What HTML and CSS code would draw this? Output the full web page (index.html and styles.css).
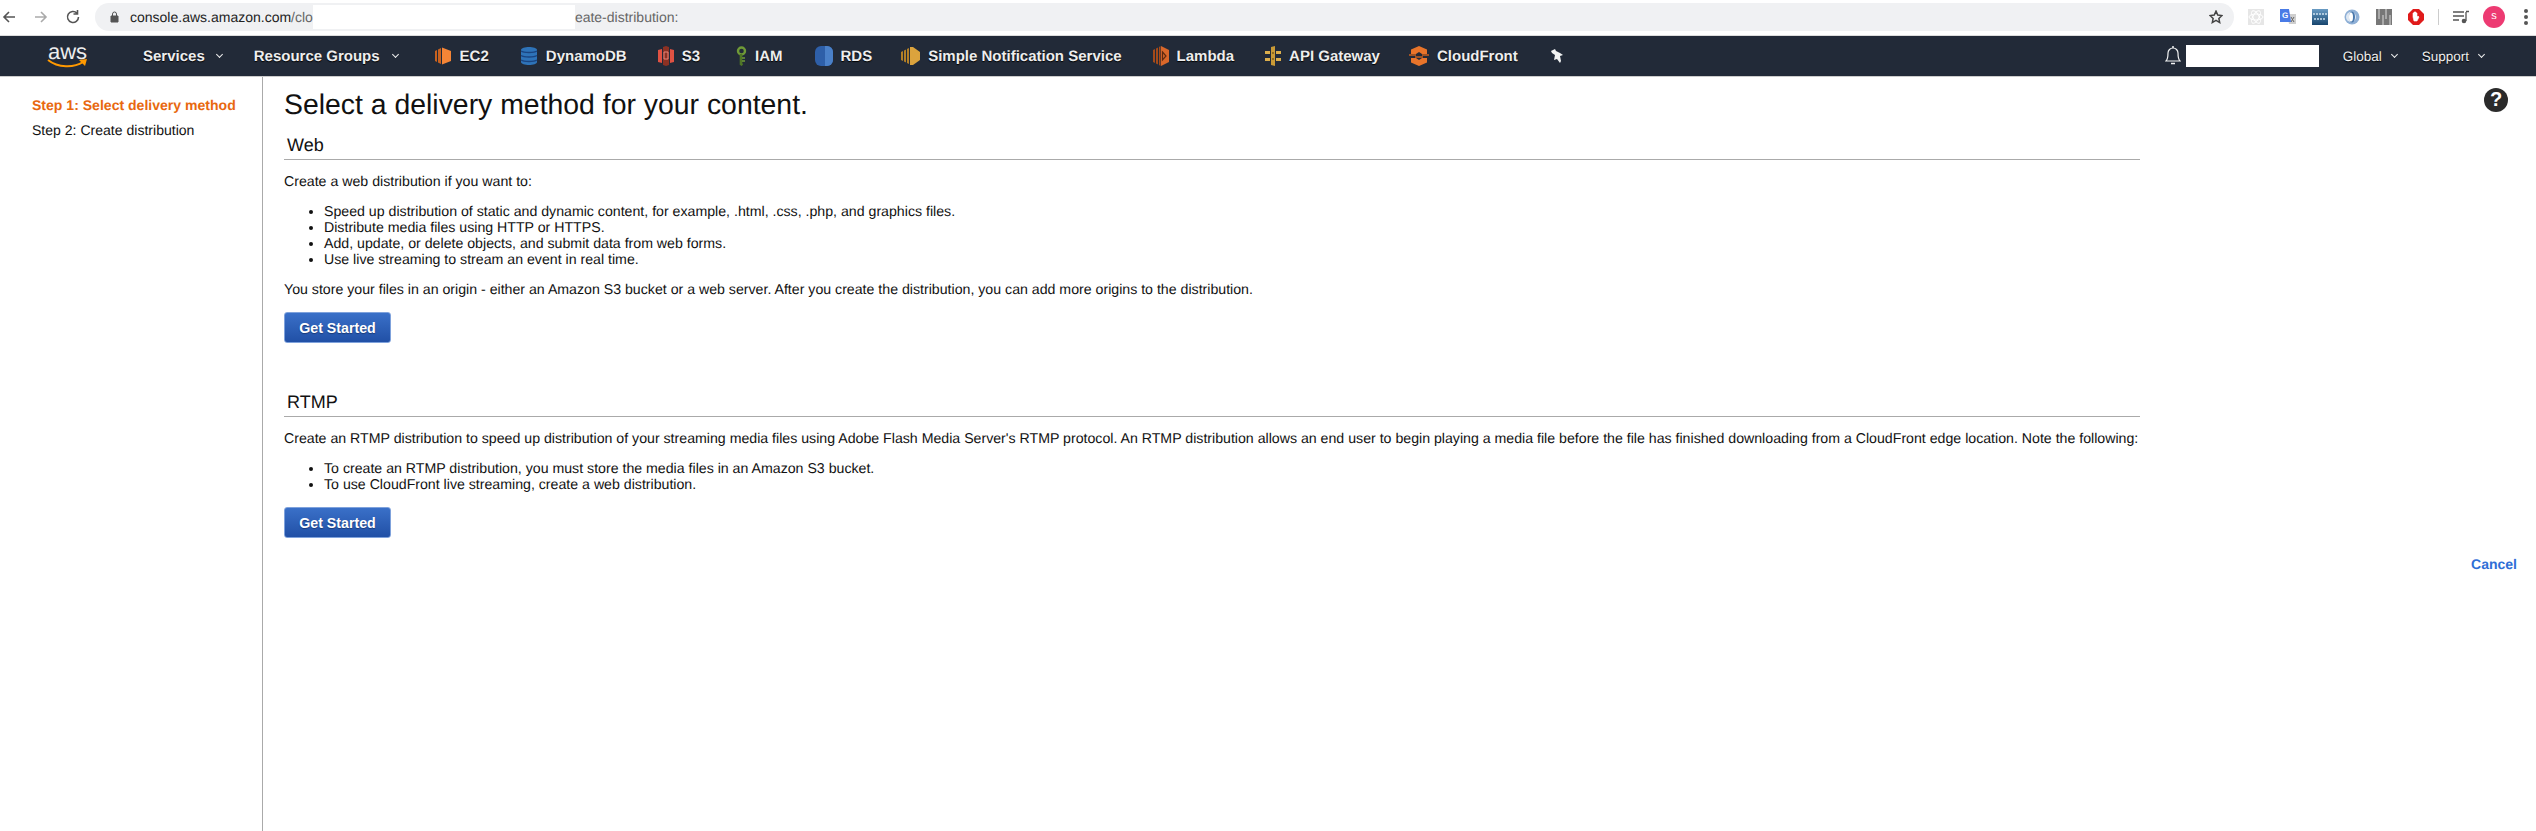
FILE: index.html
```html
<!DOCTYPE html>
<html lang="en">
<head>
    <meta charset="UTF-8">
    <title>CloudFront Management Console</title>
    <link rel="stylesheet" href="styles.css">
</head>
<body>
    <div class="browser-bar">
        <svg class="nav-icon" width="16" height="16" viewBox="0 0 16 16"><path d="M14 8H3M8 3 3 8l5 5" fill="none" stroke="#555" stroke-width="1.6"/></svg>
        <svg class="nav-icon" width="16" height="16" viewBox="0 0 16 16"><path d="M2 8h11M8 3l5 5-5 5" fill="none" stroke="#aaa" stroke-width="1.6"/></svg>
        <svg class="nav-icon" width="16" height="16" viewBox="0 0 16 16"><path d="M13.5 8a5.500 5.500 0 1 1-1.600-3.900M12.500 1v4h-4" fill="none" stroke="#555" stroke-width="1.6"/></svg>
        <div class="address">
            <svg class="lock" width="9" height="12" viewBox="0 0 9 12"><path d="M1 5h7v6H1zM2.500 5V3a2 2 0 0 1 4 0v2" fill="none" stroke="#555"/><path d="M1 5h7v6H1z" fill="#555"/></svg>
            <span class="url"><b>console.aws.amazon.com</b>/clo</span>
            <span class="url-mask"></span>
            <span class="url">eate-distribution:</span>
            <svg class="star" width="14" height="14" viewBox="0 0 24 24"><path d="m12 2 3 6.600 7.200.9-5.300 4.900 1.400 7.100L12 17.900l-6.300 3.600 1.400-7.100L1.800 9.500 9 8.600z" fill="none" stroke="#444" stroke-width="2.600"/></svg>
        </div>
        <div class="extensions">
            <svg width="16" height="16" viewBox="0 0 16 16"><rect width="16" height="16" fill="#e6e6e6"/><g fill="none" stroke="#fff" stroke-width="1"><ellipse cx="8" cy="8" rx="7" ry="3"/><ellipse cx="8" cy="8" rx="7" ry="3" transform="rotate(60 8 8)"/><ellipse cx="8" cy="8" rx="7" ry="3" transform="rotate(120 8 8)"/></g></svg>
            <svg width="16" height="16" viewBox="0 0 16 16"><path d="M7 5h9v10H9z" fill="#cfcfcf"/><path d="M11 8l3 5M14 8l-3 5" stroke="#666"/><path d="M0 0h9l2 13H0z" fill="#4a7be6"/><text x="2" y="9" class="ext-letter">G</text></svg>
            <svg width="16" height="16" viewBox="0 0 16 16"><defs><linearGradient id="dictfill" x1="0" y1="0" x2="0" y2="1"><stop offset="0" stop-color="#6a9cc4"/><stop offset="1" stop-color="#17456e"/></linearGradient></defs><rect width="16" height="16" fill="url(#dictfill)"/><path d="M1 5h14M2 10h12" stroke="#cfe2f0" stroke-width="1.400" stroke-dasharray="2 1"/></svg>
            <svg width="16" height="16" viewBox="0 0 16 16"><circle cx="8" cy="8" r="7.500" fill="#8fb0d6"/><circle cx="7" cy="8" r="5" fill="#dfe8f2"/><ellipse cx="8" cy="8" rx="3" ry="5.500" fill="#4a78ac"/><ellipse cx="7" cy="8" rx="2" ry="4.500" fill="#fff"/></svg>
            <svg width="16" height="16" viewBox="0 0 16 16"><rect width="16" height="16" fill="#777"/><path d="M3 0v10M7 6v10M10 0v10M14 6v10" stroke="#ddd" stroke-width="1"/></svg>
            <svg width="16" height="16" viewBox="0 0 16 16"><path d="M5 0h6l5 5v6l-5 5H5l-5-5V5z" fill="#e01b1b"/><path d="M5 8V4h1v3-4h1v4-4h1v4-3h1v4l1-1 1 1-2 4H6z" fill="#fff" stroke="#fff" stroke-width=".6"/></svg>
            <span class="ext-sep"></span>
            <svg class="queue" width="16" height="14" viewBox="0 0 16 14"><path d="M0 2h11M0 6h11M0 10h6M13 2v9M13 1.500h3" fill="none" stroke="#555" stroke-width="1.300"/><circle cx="11" cy="11" r="2.300" fill="#555"/></svg>
            <span class="avatar">s</span>
            <span class="dots"><i></i><i></i><i></i></span>
        </div>
    </div>

    <nav class="topnav">
        <a class="aws-logo">aws
            <svg width="41" height="10" viewBox="0 0 41 10"><path d="M1 1c10 8 26 8 35 2" fill="none" stroke="#f90" stroke-width="2"/><path d="m32 1 8-1-2 7z" fill="#f90"/></svg>
        </a>
        <a class="nav-menu services">Services <span class="caret"></span></a>
        <a class="nav-menu groups">Resource Groups <span class="caret"></span></a>
        <div class="shortcuts">
            <a><svg width="18" height="20" viewBox="0 0 18 20"><path d="M8 1.500 17 5v10l-9 3.500z" fill="#f58536"/><path d="M1 5l2-1v12l-2-1zM4 3.500l3-1.500v16l-3-1.500z" fill="#c8611f"/></svg>EC2</a>
            <a><svg width="18" height="20" viewBox="0 0 18 20"><path d="M1 4c0-4 16-4 16 0v12c0 4-16 4-16 0z" fill="#2e73b8"/><path d="M1 5c3 2 13 2 16 0M1 9.500c3 2 13 2 16 0M1 14c3 2 13 2 16 0" fill="none" stroke="#1a4480" stroke-width="1.400"/></svg>DynamoDB</a>
            <a><svg width="16" height="20" viewBox="0 0 16 20"><path d="M0 4l4-1v14l-4-1zM16 4l-4-1v14l4-1z" fill="#e05243"/><path d="M5 1l3-1 3 1v18l-3 1-3-1z" fill="#8c3123"/><path d="M6 6h4v7H6z" fill="none" stroke="#e8867b"/></svg>S3</a>
            <a class="iam"><svg width="11" height="20" viewBox="0 0 11 20"><circle cx="5.500" cy="5" r="3.500" fill="none" stroke="#6f9a37" stroke-width="2.400"/><path d="M5 8v10l1.500 1" fill="none" stroke="#4f7526" stroke-width="2.600"/><path d="M6 12h3M6 15h3" stroke="#6f9a37" stroke-width="1.600"/></svg>IAM</a>
            <a class="rds"><svg width="18" height="20" viewBox="0 0 18 20"><rect width="18" height="20" rx="6" fill="#2e5fa8"/><path d="M10 0h2a6 6 0 0 1 6 6v8a6 6 0 0 1-6 6h-2z" fill="#4a80c8"/></svg>RDS</a>
            <a class="sns"><svg width="19" height="18" viewBox="0 0 19 18"><path d="M0 5l2-1v10l-2-1zM3 3.500l2-1v13l-2-1zM6 2l2-1v16l-2-1z" fill="#b27f25"/><path d="M9 0h3l7 5v8l-7 5H9z" fill="#dba33d"/></svg>Simple Notification Service</a>
            <a><svg width="16" height="20" viewBox="0 0 16 20"><path d="M8 0l8 4v12l-8 4z" fill="#d9672a"/><path d="M0 4l2-1v14l-2-1zM3 2.500 5 1.500v17l-2-1zM6 1l1.500-1v20L6 19z" fill="#a44a1a"/><path d="M9.500 6 13 10l-3.500 4z" fill="none" stroke="#5e2a10" stroke-width="1.200"/></svg>Lambda</a>
            <a><svg width="16" height="20" viewBox="0 0 16 20"><path d="M6 1l4-1v20l-4-1z" fill="#c99a36"/><path d="M0 5h5v3H0zM0 12h5v3H0zM11 5h5v3h-5zM11 12h5v3h-5z" fill="#dcae4c"/><path d="M7 7h2M7 13h2" stroke="#7d5d18" stroke-width="1.400"/></svg>API Gateway</a>
            <a class="cf"><svg width="20" height="20" viewBox="0 0 20 20"><path d="M10 0l8 3.500V8h-5l-3-2-3 2H2V3.500zM2 12h5l3 2 3-2h5v4.500L10 20l-8-3.500z" fill="#e8742a"/><path d="M0 9h7M13 9h7M6 11h8" stroke="#c85f1e" stroke-width="1.500"/></svg>CloudFront</a>
            <a class="pin"><svg width="12" height="14" viewBox="0 0 12 14"><path d="M0 2 4 0l1 2 4 2 3 2-3 1 1 5-1 2-3-4-3 1 1-5-3-2z" fill="#f2f3f3"/></svg></a>
        </div>
        <div class="nav-right">
            <svg class="bell" width="16" height="20" viewBox="0 0 16 20"><path d="M1 15c2-2 2-4 2-8a5 5 0 0 1 10 0c0 4 0 6 2 8z" fill="none" stroke="#f2f3f3" stroke-width="1.200"/><path d="M6 17.500h4M8 0v2" stroke="#f2f3f3" stroke-width="1.500"/></svg>
            <span class="account-mask"></span>
            <a class="nav-small global">Global <span class="caret"></span></a>
            <a class="nav-small support">Support <span class="caret"></span></a>
        </div>
    </nav>

    <div class="page">
        <aside class="steps">
            <p class="step active">Step 1: Select delivery method</p>
            <p class="step">Step 2: Create distribution</p>
        </aside>
        <main class="content">
            <div class="wizard">
                <h1>Select a delivery method for your content.</h1>

                <section class="method">
                    <h2>Web</h2>
                    <p>Create a web distribution if you want to:</p>
                    <ul>
                        <li>Speed up distribution of static and dynamic content, for example, .html, .css, .php, and graphics files.</li>
                        <li>Distribute media files using HTTP or HTTPS.</li>
                        <li>Add, update, or delete objects, and submit data from web forms.</li>
                        <li>Use live streaming to stream an event in real time.</li>
                    </ul>
                    <p>You store your files in an origin - either an Amazon S3 bucket or a web server. After you create the distribution, you can add more origins to the distribution.</p>
                    <button class="start">Get Started</button>
                </section>

                <section class="method rtmp">
                    <h2>RTMP</h2>
                    <p>Create an RTMP distribution to speed up distribution of your streaming media files using Adobe Flash Media Server's RTMP protocol. An RTMP distribution allows an end user to begin playing a media file before the file has finished downloading from a CloudFront edge location. Note the following:</p>
                    <ul>
                        <li>To create an RTMP distribution, you must store the media files in an Amazon S3 bucket.</li>
                        <li>To use CloudFront live streaming, create a web distribution.</li>
                    </ul>
                    <button class="start">Get Started</button>
                </section>
            </div>
            <div class="side">
                <span class="help">?</span>
                <a class="cancel">Cancel</a>
            </div>
        </main>
    </div>
</body>
</html>
```
FILE: styles.css
```css
body {
  font-family: "Liberation Sans", Arial, sans-serif;
  font-size: 14px;
  margin: 0;
  padding: 0;
  background-color: #fff;
  color: #111;
  height: 831px;
  overflow: hidden;
  text-rendering: geometricPrecision;
}

/* browser chrome */
.browser-bar {
  height: 36px;
  display: flex;
  align-items: center;
  padding: 0 0 1px 1px;
  box-sizing: border-box;
  background-color: #fff;
  border-bottom: 1px solid #ddd;
}
.nav-icon {
  margin-right: 16px;
  flex: none;
}
.address {
  width: 2139px;
  height: 28px;
  flex: none;
  margin-left: -2px;
  padding-left: 15px;
  box-sizing: border-box;
  display: flex;
  align-items: center;
  background-color: #f0f1f3;
  border-radius: 14px;
  font-size: 14px;
  color: #666;
}
.lock {
  margin-right: 11px;
}
.url b {
  font-weight: normal;
  color: #222;
}
.url-mask {
  width: 262px;
  height: 24px;
  flex: none;
  background-color: #fff;
}
.star {
  margin-left: auto;
  margin-right: 11px;
}
.extensions {
  flex: 1;
  display: flex;
  align-items: center;
  gap: 16px;
  padding-left: 14px;
}
.ext-letter {
  font-size: 8px;
  font-weight: bold;
  fill: #fff;
}
.ext-sep {
  width: 1px;
  height: 16px;
  margin: 0 -2px;
  background-color: #ccc;
}
.queue {
  margin-right: -2px;
}
.avatar {
  width: 22px;
  height: 22px;
  margin-right: 3px;
  border-radius: 50%;
  background-color: #ed3a72;
  color: #fff;
  font-size: 11px;
  text-align: center;
  line-height: 21px;
}
.dots {
  display: flex;
  flex-direction: column;
  gap: 2px;
}
.dots i {
  width: 4px;
  height: 4px;
  background-color: #555;
  border-radius: 50%;
}

/* aws nav */
.topnav {
  height: 40px;
  display: flex;
  align-items: center;
  background-color: #222a38;
  border-bottom: 1px solid #ccc;
  color: #eee;
  font-weight: bold;
  font-size: 15px;
  white-space: nowrap;
  text-shadow: 0 1px 1px #000;
}
.aws-logo {
  width: 41px;
  margin-left: 47px;
  font-weight: normal;
  font-size: 22px;
  line-height: 15px;
  text-shadow: none;
  display: flex;
  flex-direction: column;
  align-items: center;
}
.nav-menu {
  display: flex;
  align-items: center;
  gap: 12px;
}
.services {
  margin-left: 55px;
}
.groups {
  gap: 13px;
  margin-left: 32px;
  margin-right: 36px;
}
.caret {
  display: block;
  width: 5px;
  height: 5px;
  margin-top: -3px;
  box-sizing: border-box;
  border-right: 1.5px solid #eee;
  border-bottom: 1.5px solid #eee;
  transform: rotate(45deg);
}
.shortcuts {
  display: flex;
  align-items: center;
  gap: 31px;
}
.shortcuts a {
  display: flex;
  align-items: center;
  gap: 8px;
}
.shortcuts .iam {
  margin-left: 5px;
}
.shortcuts .rds {
  margin-left: 1px;
}
.shortcuts .sns {
  margin-left: -2px;
}
.shortcuts .cf {
  margin-left: -2px;
}
.shortcuts .pin {
  margin-left: 2px;
}
.nav-right {
  margin-left: auto;
  margin-right: 52px;
  display: flex;
  align-items: center;
  font-weight: normal;
  font-size: 13.5px;
}
.account-mask {
  width: 133px;
  height: 22px;
  margin-left: 5px;
  background-color: #fff;
}
.nav-small {
  display: flex;
  align-items: center;
  gap: 10px;
}
.global {
  margin-left: 24px;
}
.support {
  margin-left: 25px;
}

/* page */
.page {
  display: flex;
  height: 754px;
}
.steps {
  width: 263px;
  flex: none;
  box-sizing: border-box;
  padding: 20px 0 0 32px;
  border-right: 1px solid #aaa;
}
.step {
  margin: 0 0 9px;
  line-height: 16px;
  font-size: 14.05px;
}
.active {
  color: #e8680f;
  font-weight: bold;
}
.content {
  flex: 1;
  display: flex;
}
.wizard {
  width: 1877px;
  box-sizing: border-box;
  padding-left: 21px;
  flex: none;
  font-size: 14.17px;
}
h1 {
  font-weight: normal;
  font-size: 28.4px;
  line-height: 36px;
  margin: 10px 0 0;
}
h2 {
  font-weight: normal;
  font-size: 18px;
  line-height: 24px;
  margin: 10px 0 0;
  padding-left: 3px;
  padding-bottom: 2px;
  border-bottom: 1px solid #aaa;
}
.method p {
  margin: 14px 0 0;
  line-height: 16px;
}
.method ul {
  margin: 14px 0 0;
  padding-left: 40px;
}
.method li {
  line-height: 16px;
}
.start {
  display: block;
  width: 107px;
  height: 31px;
  margin-top: 14px;
  padding: 0;
  border: 1px solid #7fa2dc;
  border-radius: 3px;
  background: linear-gradient(#3a70c8, #2150a6);
  color: #fff;
  font-family: inherit;
  font-size: 14.2px;
  font-weight: bold;
  text-shadow: 0 1px 1px #1a3a78;
}
.rtmp {
  margin-top: 47px;
}
.side {
  flex: 1;
  position: relative;
}
.help {
  position: absolute;
  top: 11px;
  right: 28px;
  width: 24px;
  height: 24px;
  border-radius: 50%;
  background-color: #2b2b2b;
  color: #fff;
  font-weight: bold;
  font-size: 20px;
  line-height: 24px;
  text-align: center;
}
.cancel {
  position: absolute;
  top: 479px;
  right: 19px;
  color: #2f6fd6;
  font-weight: bold;
  font-size: 14px;
}
```
